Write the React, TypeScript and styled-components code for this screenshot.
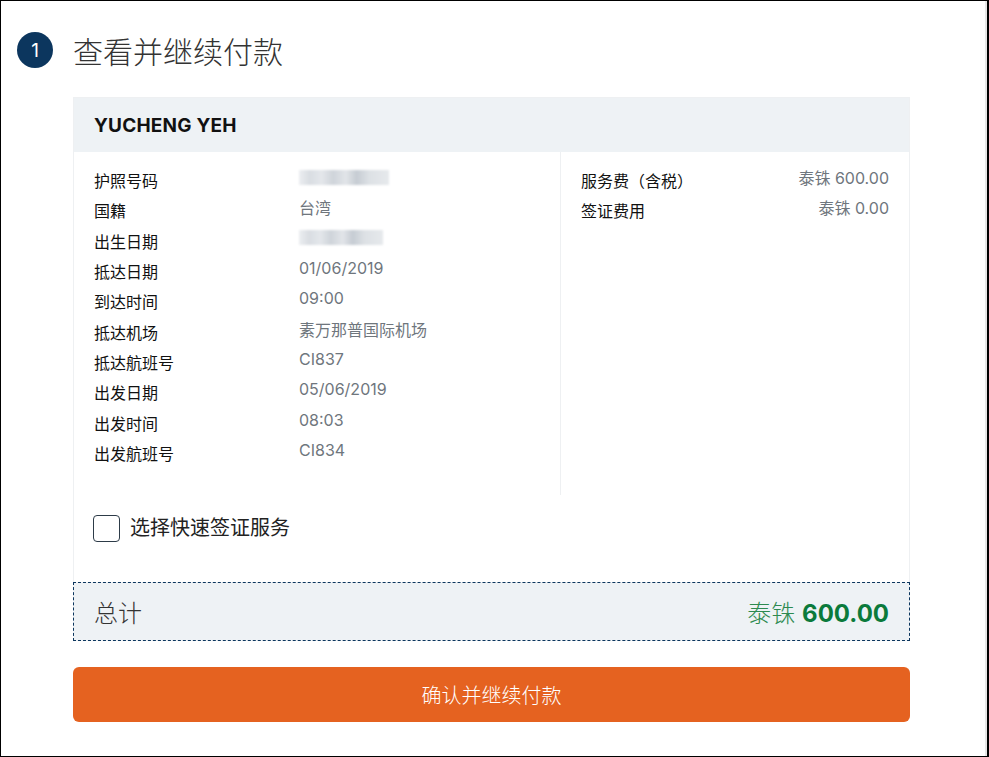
import * as React from 'react';
import styled, { createGlobalStyle } from 'styled-components';

const GlobalStyle = createGlobalStyle`
    html, body {
        margin: 0;
        padding: 0;
        background: #ffffff;
    }
    body {
        font-family: Inter, "Noto Sans CJK SC", sans-serif;
        color: #212529;
    }
`;

interface Row {
    label: string;
    value?: string;
    blurred?: number;
}

const details: Row[] = [
    { label: '护照号码', blurred: 90 },
    { label: '国籍', value: '台湾' },
    { label: '出生日期', blurred: 84 },
    { label: '抵达日期', value: '01/06/2019' },
    { label: '到达时间', value: '09:00' },
    { label: '抵达机场', value: '素万那普国际机场' },
    { label: '抵达航班号', value: 'CI837' },
    { label: '出发日期', value: '05/06/2019' },
    { label: '出发时间', value: '08:03' },
    { label: '出发航班号', value: 'CI834' },
];

const fees = [
    { label: '服务费（含税）', value: '泰铢 600.00' },
    { label: '签证费用', value: '泰铢 0.00' },
];

export default function App() {
    const [fast, setFast] = React.useState(false);

    return (
        <Frame>
            <GlobalStyle />
            <StepHeader>
                <StepBadge>1</StepBadge>
                <StepTitle>查看并继续付款</StepTitle>
            </StepHeader>

            <Content>
                <Card>
                    <CardHeader>YUCHENG YEH</CardHeader>
                    <CardBody>
                        <DetailColumn>
                            {details.map((row) => (
                                <DetailRow key={row.label}>
                                    <Label>{row.label}</Label>
                                    {row.blurred ? (
                                        <Blurred style={{ width: row.blurred }} />
                                    ) : (
                                        <Value>{row.value}</Value>
                                    )}
                                </DetailRow>
                            ))}
                        </DetailColumn>
                        <FeeColumn>
                            {fees.map((fee) => (
                                <FeeRow key={fee.label}>
                                    <Label>{fee.label}</Label>
                                    <Value>{fee.value}</Value>
                                </FeeRow>
                            ))}
                        </FeeColumn>
                    </CardBody>

                    <CheckRow onClick={() => setFast(!fast)}>
                        <CheckBox $checked={fast} />
                        <CheckLabel>选择快速签证服务</CheckLabel>
                    </CheckRow>

                    <TotalBox>
                        <TotalLabel>总计</TotalLabel>
                        <TotalAmount>
                            <Currency>泰铢</Currency> <strong>600.00</strong>
                        </TotalAmount>
                    </TotalBox>
                </Card>

                <ConfirmButton type="button">确认并继续付款</ConfirmButton>
            </Content>
        </Frame>
    );
}

const Frame = styled.div`
    box-sizing: border-box;
    width: 989px;
    height: 757px;
    border: 1px solid #000000;
    border-right-width: 2px;
    box-shadow: inset -2px 0 0 #e6e6e6;
    overflow: hidden;
`;

const StepHeader = styled.div`
    display: flex;
    align-items: center;
    gap: 20px;
    padding: 31px 0 0 16px;
`;

const StepBadge = styled.div`
    width: 36px;
    height: 36px;
    border-radius: 50%;
    background: #0c365e;
    color: #ffffff;
    display: flex;
    align-items: center;
    justify-content: center;
    font-size: 19px;
    font-weight: 400;
`;

const StepTitle = styled.h1`
    margin: 0;
    font-size: 30px;
    font-weight: 300;
    color: #333333;
    line-height: 36px;
    position: relative;
    top: 2px;
`;

const Content = styled.div`
    padding: 29px 77px 0 72px;
`;

const Card = styled.div`
    border: 1px solid #eef0f2;
    border-bottom: none;
`;

const CardHeader = styled.div`
    height: 54px;
    display: flex;
    align-items: center;
    padding: 0 20px;
    background: #eef2f5;
    font-size: 19px;
    font-weight: 700;
    color: #111111;
    letter-spacing: 0.2px;
`;

const CardBody = styled.div`
    display: grid;
    grid-template-columns: 487px 1fr;
`;

const DetailColumn = styled.div`
    padding: 12px 20px 28px 20px;
    border-right: 1px solid #eef0f2;
`;

const DetailRow = styled.div`
    display: grid;
    grid-template-columns: 205px 1fr;
    align-items: center;
    height: 30.3px;
`;

const FeeColumn = styled.div`
    padding: 12px 20px;
`;

const FeeRow = styled.div`
    display: flex;
    justify-content: space-between;
    align-items: center;
    height: 30.3px;
`;

const Label = styled.span`
    font-size: 16px;
    color: #111111;
    position: relative;
    top: 1px;
`;

const Value = styled.span`
    font-size: 16px;
    color: #6f767d;
    position: relative;
    top: -2px;
`;

const Blurred = styled.div`
    height: 15px;
    background: linear-gradient(
        90deg,
        #eceef1 0%,
        #d9dde2 12%,
        #e4e7eb 25%,
        #cfd4da 38%,
        #e2e5e9 52%,
        #c6ccd3 64%,
        #dde1e5 78%,
        #e6e9ec 100%
    );
    filter: blur(1px);
    position: relative;
    top: -2px;
`;

const CheckRow = styled.label`
    display: flex;
    align-items: center;
    gap: 10px;
    padding: 20px 20px 40px 19px;
    cursor: pointer;
`;

const CheckBox = styled.span<{ $checked: boolean }>`
    box-sizing: border-box;
    width: 27px;
    height: 27px;
    border: 1.5px solid #2d3b48;
    border-radius: 4px;
    background: ${(p) => (p.$checked ? '#0c365e' : '#ffffff')};
`;

const CheckLabel = styled.span`
    font-size: 20px;
    line-height: 27px;
    color: #222222;
`;

const TotalBox = styled.div`
    box-sizing: border-box;
    height: 59px;
    margin: 0 -1px;
    display: flex;
    align-items: center;
    justify-content: space-between;
    padding: 0 20px;
    background: #eef2f5;
    border: 1px dashed #0c365e;
`;

const TotalLabel = styled.span`
    font-size: 24px;
    font-weight: 300;
    color: #333333;
`;

const TotalAmount = styled.span`
    font-size: 24px;
    color: #0b7a3b;

    strong {
        font-weight: 700;
    }
`;

const Currency = styled.span`
    font-weight: 300;
    color: #2d8a50;
`;

const ConfirmButton = styled.button`
    display: block;
    width: 100%;
    height: 55px;
    margin-top: 26px;
    border: none;
    border-radius: 6px;
    background: #e56220;
    color: #ffffff;
    font-family: Inter, "Noto Sans CJK SC", sans-serif;
    font-size: 20px;
    font-weight: 300;
    cursor: pointer;
`;
